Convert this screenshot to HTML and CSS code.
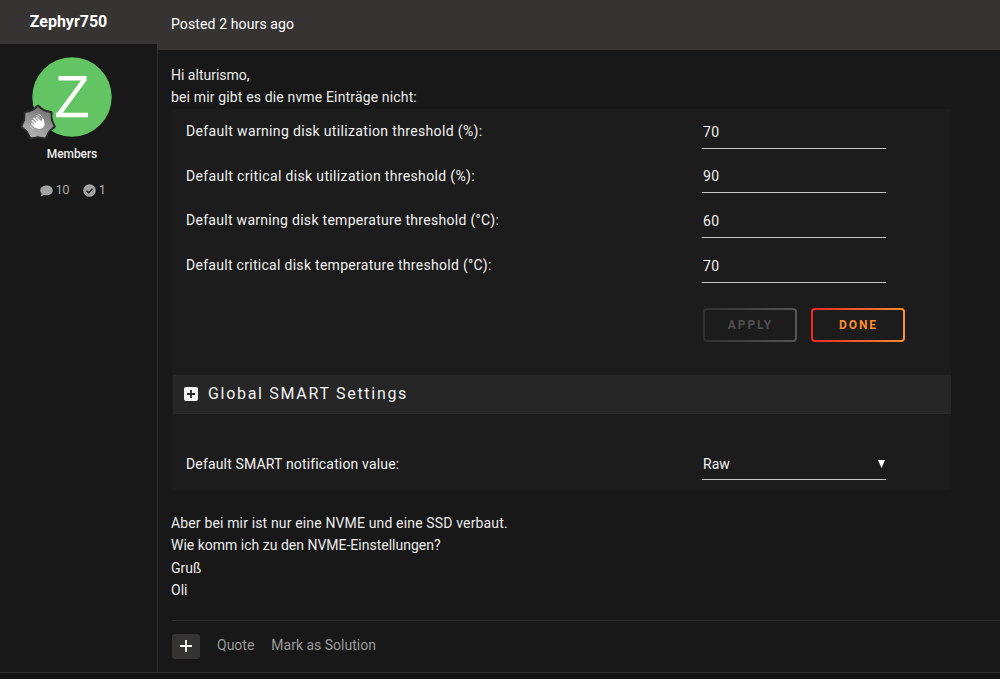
FILE: index.html
```html
<!DOCTYPE html>
<html lang="de">
<head>
  <meta charset="UTF-8" />
  <meta name="viewport" content="width=device-width, initial-scale=1.0" />
  <title>Forum Post</title>
  <link rel="stylesheet" href="styles.css">
</head>
<body>
  <article class="post">
    <!-- Author -->
    <aside class="author">
      <h3 class="author-name">Zephyr750</h3>
      <div class="avatar">
        <svg class="avatar-img" width="80" height="80" viewBox="0 0 80 80">
          <circle cx="40" cy="40" r="39.7" fill="#62c462" />
          <path d="M26.500 21.300H54.500M24 58H56M52.800 22L26.800 57.500" fill="none" stroke="#fff" stroke-width="4.600" />
        </svg>
        <svg class="rank" width="34" height="35" viewBox="0 0 34 35">
          <defs>
            <linearGradient id="rank-fill" x1="0.8" y1="0" x2="0.3" y2="1">
              <stop offset="0" stop-color="#707070" />
              <stop offset="1" stop-color="#b4b4b4" />
            </linearGradient>
          </defs>
          <path d="M17 2.500Q22 7.600 29.100 8.300Q28.200 15.400 32.100 21.400Q26 25.200 23.700 32Q17 29.500 10.300 32Q8 25.200 1.900 21.400Q5.800 15.400 4.900 8.300Q12 7.600 17 2.500Z" fill="url(#rank-fill)" stroke="#292929" stroke-width="5" stroke-linejoin="round" />
          <path d="M17 2.500Q22 7.600 29.100 8.300Q28.200 15.400 32.100 21.400Q26 25.200 23.700 32Q17 29.500 10.300 32Q8 25.200 1.900 21.400Q5.800 15.400 4.900 8.300Q12 7.600 17 2.500Z" fill="url(#rank-fill)" stroke="url(#rank-fill)" stroke-width="1" stroke-linejoin="round" />
          <g transform="translate(2 1) scale(0.880)">
            <g stroke="#fff" stroke-linecap="round" fill="none">
              <path d="M10.500 16.500L16 22M12.500 14L18 20M15.500 13L20 18" stroke-width="1.600" />
              <path d="M9.800 20L14 24" stroke-width="1.600" />
              <path d="M15.500 10.800Q18 10.800 19.500 13.500M18 9.500Q20.500 10 21.500 12.500M8.500 23L11.500 26" stroke-width="0.700" />
            </g>
            <path d="M12.500 21L18 15.500L21 18L21.500 14.300Q23.500 13.500 23.800 16L24.500 21.500Q23 25.500 18.500 26Q16 26 12.500 23Z" fill="#fff" />
          </g>
        </svg>
      </div>
      <div class="group">Members</div>
      <div class="stats">
        <span class="stat">
          <svg width="13" height="12" viewBox="0 0 13 12">
            <path d="M6.500 0.500C10 0.500 12.800 2.600 12.800 5.400S10 10.300 6.500 10.300Q5 10.300 3.800 9.900Q2.300 11.300 0.300 11.300Q1.700 9.800 1.700 8.500Q0.200 7.100 0.200 5.400C0.200 2.600 3 0.500 6.500 0.500Z" fill="#a2a2a2" />
          </svg>
          10
        </span>
        <span class="stat">
          <svg width="13" height="13" viewBox="0 0 13 13">
            <circle cx="6.500" cy="6.500" r="6.300" fill="#a2a2a2" />
            <path d="M3.500 6.700L5.600 8.700L9.500 4.800" fill="none" stroke="#181818" stroke-width="1.500" />
          </svg>
          1
        </span>
      </div>
    </aside>

    <!-- Post body -->
    <section class="content">
      <header class="posted">Posted 2 hours ago</header>
      <div class="message">
        <p>Hi alturismo,<br><span class="wide">bei mir gibt es die nvme Einträge nicht:</span></p>

        <div class="settings">
          <div class="row">
            <label for="warn-use">Default warning disk utilization threshold (%):</label>
            <input type="text" id="warn-use" value="70" />
          </div>
          <div class="row">
            <label for="crit-use">Default critical disk utilization threshold (%):</label>
            <input type="text" id="crit-use" value="90" />
          </div>
          <div class="row temp">
            <label for="warn-temp">Default warning disk temperature threshold (°C):</label>
            <input type="text" id="warn-temp" value="60" />
          </div>
          <div class="row temp">
            <label for="crit-temp">Default critical disk temperature threshold (°C):</label>
            <input type="text" id="crit-temp" value="70" />
          </div>
          <div class="buttons">
            <button class="btn apply" disabled>APPLY</button>
            <button class="btn done">DONE</button>
          </div>
          <h4 class="section-title">
            <svg width="14" height="14" viewBox="0 0 14 14">
              <rect width="14" height="14" rx="2" fill="#f2f2f2" />
              <path d="M7 3V11M3 7H11" stroke="#262626" stroke-width="1.800" />
            </svg>
            <span>Global SMART Settings</span>
          </h4>
          <div class="row smart">
            <label>Default SMART notification value:</label>
            <div class="select">
              <span>Raw</span>
              <svg width="7" height="8" viewBox="0 0 7 8"><path d="M0 0H7L3.500 8Z" fill="#fff" /></svg>
            </div>
          </div>
        </div>

        <p class="outro"><span class="wide">Aber bei mir ist nur eine NVME und eine SSD verbaut.</span><br>Wie komm ich zu den NVME-Einstellungen?<br>Gruß<br>Oli</p>
      </div>
      <footer class="actions">
        <button class="multi">
          <svg width="12" height="12" viewBox="0 0 12 12"><path d="M6 0V12M0 6H12" stroke="#fff" stroke-width="1.800" /></svg>
        </button>
        <a class="quote">Quote</a>
        <a class="solution">Mark as Solution</a>
      </footer>
    </section>
  </article>
</body>
</html>
```
FILE: styles.css
```css
* {
  box-sizing: border-box;
}

body {
  margin: 0;
  height: 679px;
  overflow: hidden;
  background: #141414;
  color: #ececec;
  font-family: Roboto, "Liberation Sans", sans-serif;
  font-size: 14px;
  line-height: 22.4px;
}

h3, h4, p {
  margin: 0;
}

svg {
  display: block;
  flex: none;
}

.post {
  display: flex;
  height: 673px;
  background: #181818;
  border-bottom: 1px solid #333;
}

.author {
  width: 157px;
  display: flex;
  flex-direction: column;
  align-items: center;
  padding-right: 13px;
}

.author-name {
  align-self: stretch;
  height: 44px;
  margin-right: -13px;
  padding-right: 20px;
  background: #363432;
  color: #fff;
  font-size: 16px;
  font-weight: 700;
  line-height: 43px;
  text-align: center;
}

.avatar {
  position: relative;
  width: 80px;
  height: 80px;
  margin-top: 13px;
}

.rank {
  position: absolute;
  left: -11px;
  top: 48px;
  overflow: visible;
}

.group {
  margin-top: 6px;
  font-size: 12px;
  font-weight: 500;
  letter-spacing: -0.1px;
}

.stats {
  display: flex;
  gap: 14px;
  margin: 14px 0 0 1px;
  color: #a2a2a2;
  font-size: 13px;
  letter-spacing: -0.7px;
}

.stat {
  display: flex;
  align-items: center;
  gap: 3px;
}

.content {
  flex: 1;
  border-left: 1px solid #303030;
}

.posted {
  height: 50px;
  margin-left: -1px;
  padding-left: 14px;
  background: #363432;
  color: #fff;
  letter-spacing: 0.12px;
  line-height: 48px;
}

.message {
  padding: 14px 0 0 13px;
}

.wide {
  letter-spacing: 0.15px;
}

.settings {
  width: 779px;
  height: 381px;
  margin-left: 1px;
  background: #1c1c1c;
  color: #f2f2f2;
}

.row {
  display: flex;
  height: 44.8px;
  padding-left: 14px;
}

.row label {
  width: 516px;
  padding-top: 11px;
  letter-spacing: 0.35px;
}

.temp label {
  letter-spacing: 0.29px;
}

.row input,
.select {
  width: 184px;
  height: 39.7px;
  border: 0;
  border-bottom: 1px solid #c8c8c8;
  padding: 7px 0 0 1px;
  background: none;
  color: #f2f2f2;
  font: inherit;
  letter-spacing: 0.5px;
}

.buttons {
  display: flex;
  gap: 14px;
  padding: 19.8px 0 0 531px;
}

.btn {
  width: 94px;
  height: 34px;
  padding: 1px 0 0 1px;
  border: 2px solid transparent;
  border-radius: 4px;
  font-family: inherit;
  font-size: 12px;
  font-weight: 700;
  letter-spacing: 1.9px;
}

.apply {
  background: linear-gradient(#1c1c1c, #1c1c1c) padding-box, linear-gradient(90deg, #303030, #555) border-box;
  color: #4f4f4f;
}

.done {
  background: linear-gradient(#1c1c1c, #1c1c1c) padding-box, linear-gradient(90deg, #f02828, #ff8c2f) border-box;
  color: #ff8c2f;
}

.section-title {
  display: flex;
  align-items: center;
  gap: 10px;
  height: 39px;
  margin: 33px 0 27px 1px;
  background: #262626;
  padding-left: 11px;
  border-bottom: 1px solid #2b2b2b;
  font-size: 16px;
  font-weight: 400;
  letter-spacing: 1.7px;
}

.smart label {
  padding-top: 12px;
  letter-spacing: 0.16px;
}

.select {
  display: flex;
  align-items: center;
  justify-content: space-between;
  height: 39px;
  padding: 9px 1px 0 1px;
  letter-spacing: 0;
}

.outro {
  margin-top: 22px;
}

.actions {
  display: flex;
  align-items: center;
  height: 51px;
  margin: 19px 0 0 14px;
  border-top: 1px solid #2d2d2d;
  color: #999;
}

.multi {
  display: flex;
  align-items: center;
  justify-content: center;
  width: 28px;
  height: 25px;
  margin-right: 17px;
  padding: 0;
  border: 0;
  border-radius: 3px;
  background: #363432;
}

.quote {
  margin: -2px 17px 0 0;
}

.solution {
  margin-top: -2px;
}
```
